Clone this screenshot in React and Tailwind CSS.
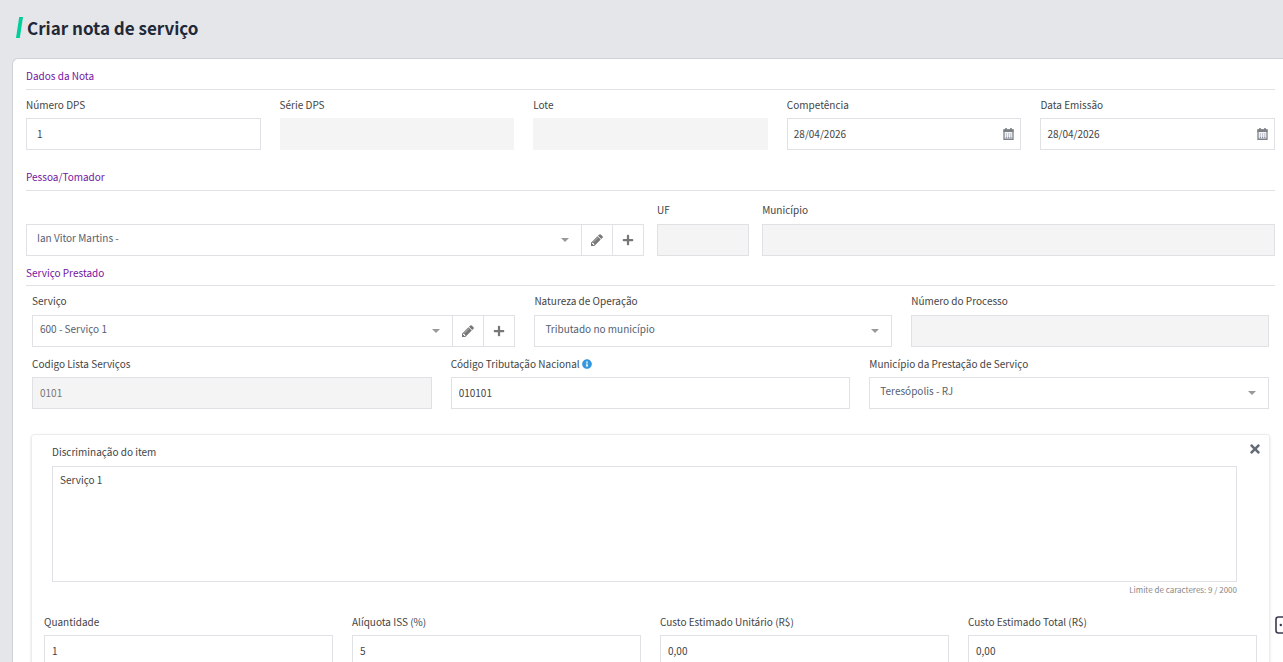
import React from "react";
import { FaInfoCircle, FaPlus, FaTimes } from "react-icons/fa";

const inputBase =
  "block h-8 w-full rounded-none border border-[#e0e1e4] text-[10px] leading-4 outline-none";

const Field = ({ id, label, children, className = "", labelClass = "mb-[5px]", hint }) => (
  <div className={`min-w-0 ${className}`}>
    <div className={`flex h-4 items-center gap-0.5 ${labelClass}`}>
      <label htmlFor={id} className="text-[10px] leading-4 text-[#444444]">
        {label}
      </label>
      {hint}
    </div>
    {children}
  </div>
);

const TextInput = ({ id, value, className = "px-[7px]" }) => (
  <input
    id={id}
    type="text"
    defaultValue={value}
    className={`${inputBase} bg-white pb-0.5 text-[#444444] ${className}`}
  />
);

const DisabledInput = ({ id, value = "", className = "" }) => (
  <input
    id={id}
    type="text"
    disabled
    defaultValue={value}
    className={`${inputBase} bg-[#f4f4f4] px-[7px] pb-0.5 text-[#777777] ${className}`}
  />
);

const PencilIcon = () => (
  <svg viewBox="0 128 1536 1536" className="h-3 w-3" fill="currentColor" aria-hidden="true">
    <path d="M363 1536l91-91-235-235-91 91v107h128v128h107zM886 608q0-22-22-22-10 0-17 7l-542 542q-7 7-7 17 0 22 22 22 10 0 17-7l542-542q7-7 7-17zM832 416l416 416-832 832h-416v-416zM1515 512q0 53-37 90l-166 166-416-416 166-165q36-38 90-38 53 0 91 38l235 234q37 39 37 91z" />
  </svg>
);

const CalendarIcon = () => (
  <svg viewBox="0 0 11 12" className="h-3 w-[11px]" fill="none" aria-hidden="true">
    <path d="M1 2h9v9.25H1z" stroke="#7d8084" strokeWidth="1.3" />
    <path d="M.5 1.5h10v2.6H.5z" fill="#7d8084" />
    <path d="M3 0v3M8 0v3" stroke="#7d8084" strokeWidth="1.6" />
    <path
      d="M2.7 6h1.4M4.9 6h1.4M7.1 6h1.4M2.7 8h1.4M4.9 8h1.4M7.1 8h1.4M2.7 9.6h1.4M4.9 9.6h1.4M7.1 9.6h1.4"
      stroke="#8d93a5"
      strokeWidth="1.2"
    />
  </svg>
);

const DateInput = ({ id, value }) => (
  <div className="flex h-8 items-center border border-[#e0e1e4] bg-white">
    <input
      id={id}
      type="text"
      defaultValue={value}
      className="h-full min-w-0 flex-1 bg-transparent pb-px pl-1.5 text-[10px] leading-4 text-[#444444] outline-none"
    />
    <button type="button" aria-label="Abrir calendário" className="flex h-full items-center px-1.5">
      <CalendarIcon />
    </button>
  </div>
);

const SelectInput = ({ id, value, label, className = "pl-2.5" }) => (
  <div className="relative min-w-0 flex-1">
    <select
      id={id}
      aria-label={label}
      className={`${inputBase} appearance-none bg-white pr-8 pb-1 text-[#566070] ${className}`}
    >
      <option>{value}</option>
    </select>
    <svg
      viewBox="0 0 8 4"
      className="pointer-events-none absolute top-[14px] right-[13px] h-1 w-2"
      aria-hidden="true"
    >
      <path d="M0 0h8L4 4z" fill="#999999" />
    </svg>
  </div>
);

const SelectWithActions = ({ id, value, label, className }) => (
  <div className="flex">
    <SelectInput id={id} value={value} label={label} className={className} />
    <button
      type="button"
      aria-label="Editar"
      className="flex h-8 w-[31px] items-center justify-center border-y border-r border-[#e0e1e4] text-[#777777]"
    >
      <PencilIcon />
    </button>
    <button
      type="button"
      aria-label="Adicionar"
      className="flex h-8 w-[31px] items-center justify-center border-y border-r border-[#e0e1e4] text-[#777777]"
    >
      <FaPlus size={12} />
    </button>
  </div>
);

const SectionTitle = ({ children, className = "pb-[5px]" }) => (
  <h2
    className={`border-b border-[#e0e1e4] text-[10px] leading-4 font-normal text-[#7414a0] ${className}`}
  >
    {children}
  </h2>
);

const ItemCard = () => (
  <section className="relative mx-[5px] mt-[25px] rounded-[3px] border border-[#ececee] px-3 pt-[9px] pb-6 shadow-sm">
    <button
      type="button"
      aria-label="Remover item"
      className="absolute top-[7px] right-[7px] text-[#656c76]"
    >
      <FaTimes size={14} />
    </button>
    <div className="mr-5 ml-2">
      <Field id="discriminacao" label="Discriminação do item" labelClass="mb-1.5">
        <textarea
          id="discriminacao"
          defaultValue="Serviço 1"
          className="block h-[116px] w-full resize-none border border-[#e0e1e4] px-[7px] py-[5px] text-[10px] leading-4 text-[#444444] outline-none"
        />
      </Field>
      <p className="mt-0.5 text-right text-[8px] leading-3 text-[#888888]">
        Limite de caracteres: 9 / 2000
      </p>
    </div>
    <div className="mt-[18px] grid grid-cols-4 gap-x-[19px]">
      <Field id="quantidade" label="Quantidade">
        <TextInput id="quantidade" value="1" />
      </Field>
      <Field id="aliquota" label="Alíquota ISS (%)">
        <TextInput id="aliquota" value="5" />
      </Field>
      <Field id="custo-unitario" label="Custo Estimado Unitário (R$)">
        <TextInput id="custo-unitario" value="0,00" />
      </Field>
      <Field id="custo-total" label="Custo Estimado Total (R$)">
        <TextInput id="custo-total" value="0,00" />
      </Field>
    </div>
  </section>
);

const App = () => {
  return (
    <div className="relative h-screen overflow-hidden bg-[#e5e6ea] font-['Noto_Sans_CJK_SC','Noto_Sans',sans-serif]">
      <header className="flex h-[58px] items-center gap-1 pb-[3px] pl-4">
        <svg viewBox="0 0 7 21" className="h-[21px] w-[7px]" aria-hidden="true">
          <path d="M3.2 0H7L3.8 21H0z" fill="#00cf9b" />
        </svg>
        <h1 className="text-[17px] leading-6 font-bold text-[#1f2937]">Criar nota de serviço</h1>
      </header>

      <main className="ml-3 rounded-tl-md border-t border-l border-[#cfd2d9] bg-white pt-[9px] pr-2 pb-6 pl-[13px]">
        <SectionTitle>Dados da Nota</SectionTitle>
        <div className="mt-[7px] grid grid-cols-5 gap-x-[19px]">
          <Field id="numero-dps" label="Número DPS">
            <TextInput id="numero-dps" value="1" className="px-2.5" />
          </Field>
          <Field id="serie-dps" label="Série DPS">
            <DisabledInput id="serie-dps" className="border-[#f4f4f4]" />
          </Field>
          <Field id="lote" label="Lote">
            <DisabledInput id="lote" className="border-[#f4f4f4]" />
          </Field>
          <Field id="competencia" label="Competência">
            <DateInput id="competencia" value="28/04/2026" />
          </Field>
          <Field id="data-emissao" label="Data Emissão">
            <DateInput id="data-emissao" value="28/04/2026" />
          </Field>
        </div>

        <div className="mt-[19px]">
          <SectionTitle>Pessoa/Tomador</SectionTitle>
        </div>
        <div className="mt-[11px] grid grid-cols-12 items-end gap-x-[13px]">
          <div className="col-span-6">
            <SelectWithActions id="tomador" label="Pessoa/Tomador" value="Ian Vitor Martins -" />
          </div>
          <Field id="uf" label="UF" labelClass="mb-1.5">
            <DisabledInput id="uf" />
          </Field>
          <Field id="municipio" label="Município" className="col-span-5" labelClass="mb-1.5">
            <DisabledInput id="municipio" />
          </Field>
        </div>

        <div className="mt-[9px]">
          <SectionTitle className="pb-1">Serviço Prestado</SectionTitle>
        </div>
        <div className="mx-1.5 mt-[7px] grid grid-cols-10 gap-x-[19px]">
          <Field id="servico" label="Serviço" className="col-span-4" labelClass="mb-1.5">
            <SelectWithActions id="servico" value="600 - Serviço 1" className="pl-[7px]" />
          </Field>
          <Field id="natureza" label="Natureza de Operação" className="col-span-3" labelClass="mb-1.5">
            <SelectInput id="natureza" value="Tributado no município" />
          </Field>
          <Field id="processo" label="Número do Processo" className="col-span-3" labelClass="mb-1.5">
            <DisabledInput id="processo" />
          </Field>
        </div>
        <div className="mx-1.5 mt-[9px] grid grid-cols-3 gap-x-[19px]">
          <Field id="codigo-lista" label="Codigo Lista Serviços">
            <DisabledInput id="codigo-lista" value="0101" />
          </Field>
          <Field
            id="codigo-tributacao"
            label="Código Tributação Nacional"
            hint={<FaInfoCircle size={10} className="text-[#3598dc]" />}
          >
            <TextInput id="codigo-tributacao" value="010101" />
          </Field>
          <Field id="municipio-prestacao" label="Município da Prestação de Serviço">
            <SelectInput id="municipio-prestacao" value="Teresópolis - RJ" />
          </Field>
        </div>

        <ItemCard />
      </main>

      <button
        type="button"
        aria-label="Abrir atendimento"
        className="absolute -right-3 bottom-7 text-[#3b3a50]"
      >
        <svg viewBox="0 0 20 18" className="h-[18px] w-5" fill="none" aria-hidden="true">
          <rect x="1" y="1" width="18" height="16" rx="2.5" stroke="currentColor" strokeWidth="1.6" />
          <circle cx="5.8" cy="9" r="1.2" fill="currentColor" />
          <circle cx="10" cy="9" r="1.2" fill="currentColor" />
          <circle cx="14.2" cy="9" r="1.2" fill="currentColor" />
        </svg>
      </button>
    </div>
  );
};

export default App;
